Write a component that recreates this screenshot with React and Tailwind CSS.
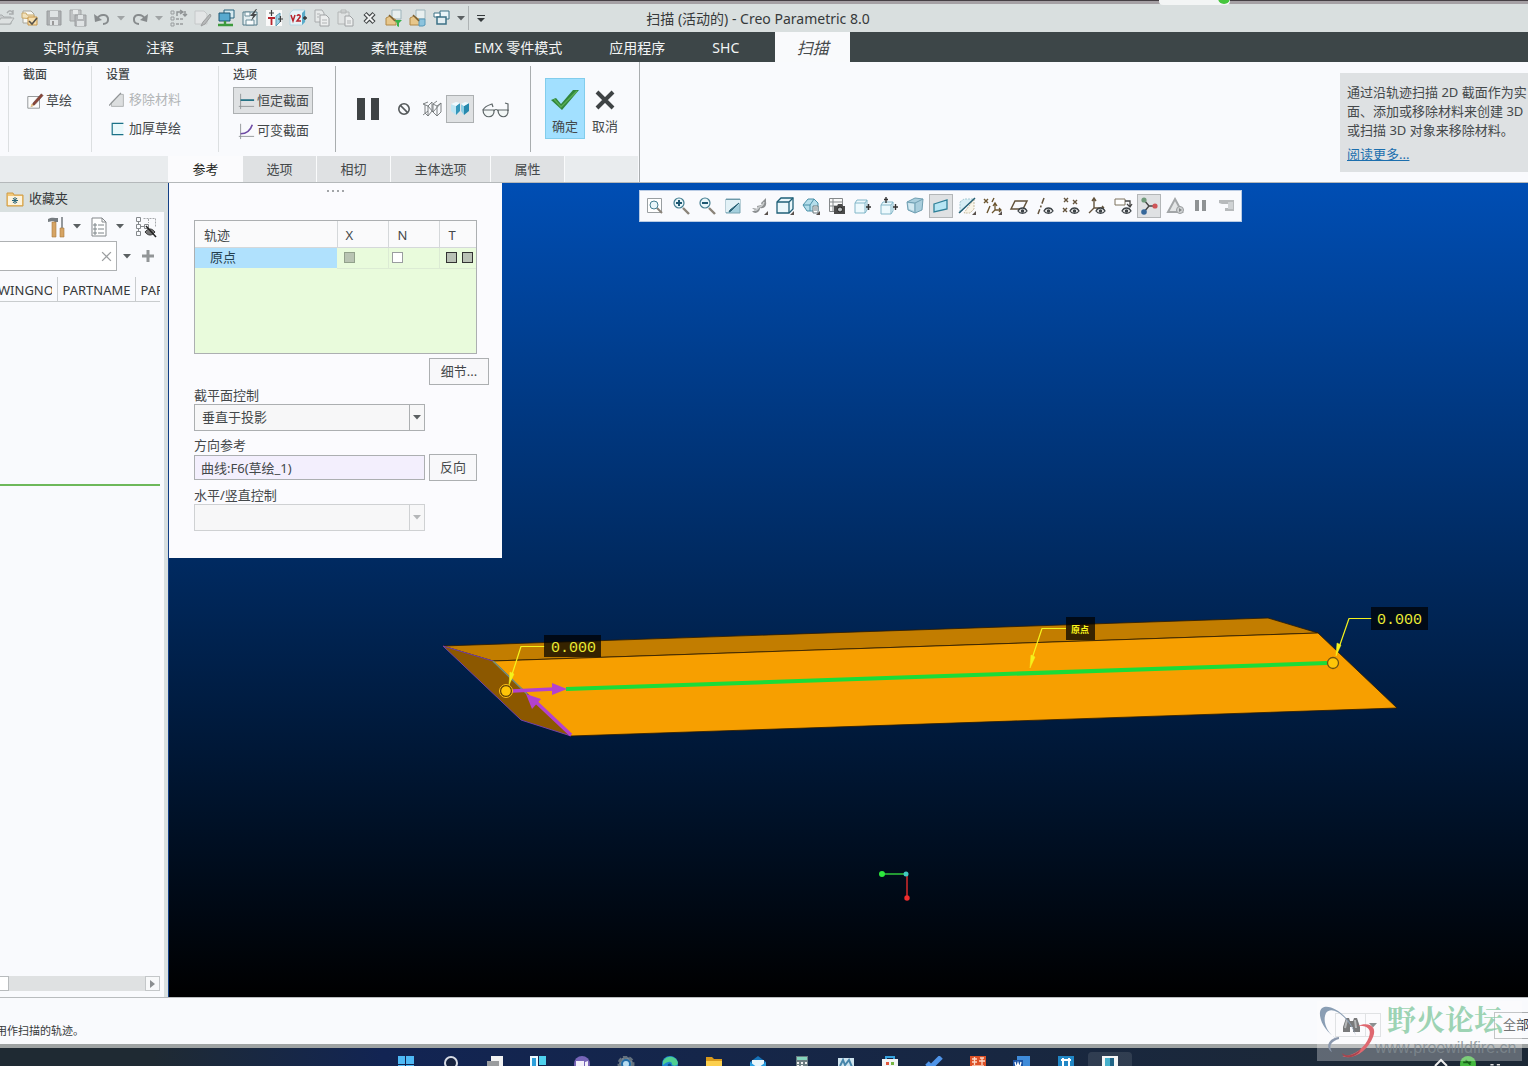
import { clsx } from 'clsx';

const quickIcons = {
  open: (
    <>
      <path d="M1 16V7h5l2 2h7v7z" fill="#c9cdce" stroke="#a9adae" />
      <path d="M1 16l4-6h13l-4 6z" fill="#dde1e1" stroke="#a9adae" />
      <path d="M11 5c2-3 4-3 6 0M17 2v4h-4" fill="none" stroke="#a9adae" strokeWidth="1.4" />
    </>
  ),
  folderCheck: (
    <>
      <path d="M3 3h8l3 3v9H3z" fill="#f7f7f2" stroke="#a8a69c" />
      <path d="M2 10V5h4l1 2h7v4z" fill="#f2e2bc" stroke="#c9a868" />
      <path d="M8 17V9h9v8z" fill="#f6dfae" stroke="#c8974b" />
      <path d="M9 13l3 3 5-6" fill="none" stroke="#55514a" strokeWidth="1.6" />
    </>
  ),
  save: (
    <>
      <path d="M3 3h14v14H3z" fill="#aeb1b3" stroke="#989b9d" />
      <path d="M6 3h8v6H6zM6 12h8v5H6z" fill="#dfe3e4" />
      <path d="M8 13h2v4H8z" fill="#999" />
    </>
  ),
  saveCopy: (
    <>
      <path d="M2 2h11v11H2z" fill="#c0c3c4" stroke="#a2a5a6" />
      <path d="M5 2h5v4H5z" fill="#e6e9e9" />
      <path d="M7 7h11v11H7z" fill="#b2b5b7" stroke="#9b9ea0" />
      <path d="M10 7h5v4h-5zM9 13h7v5H9z" fill="#dfe3e4" />
    </>
  ),
  undo: (
    <>
      <path d="M5 11C8 5 17 6 16 12c0 2-2 4-5 4" fill="none" stroke="#878b8d" strokeWidth="2" />
      <path d="M2 6l1 8 7-2z" fill="#878b8d" />
    </>
  ),
  redo: (
    <>
      <path d="M15 11C12 5 3 6 4 12c0 2 2 4 5 4" fill="none" stroke="#878b8d" strokeWidth="2" />
      <path d="M18 6l-1 8-7-2z" fill="#878b8d" />
    </>
  ),
  regenerate: (
    <>
      <path d="M3 3h3v3H3zM3 9h3v3H3zM3 15h3v3H3z" fill="none" stroke="#999d9f" />
      <path d="M8 11h8M8 16h8" stroke="#999d9f" strokeWidth="1.6" strokeDasharray="3 1" />
      <path d="M9 8V4h5M12 2l3 2-3 2M17 3v5M15 6l2 2 2-2" fill="none" stroke="#8e9294" strokeWidth="1.4" />
    </>
  ),
  edit: (
    <>
      <path d="M3 3h9l3 3v10H3z" fill="#e3e5e6" stroke="#c5c8c9" />
      <path d="M18 6l-7 8-2 4 4-2 6-8z" fill="#b7b9ba" stroke="#9b9d9e" />
    </>
  ),
  monitor: (
    <>
      <path d="M8 2h10v8H8z" fill="#d7eaf0" stroke="#27637c" />
      <path d="M3 5h11v8H3z" fill="#58a9ce" stroke="#1f5673" />
      <path d="M9 13v4M2 17h15" stroke="#3c9a3c" strokeWidth="2.4" />
    </>
  ),
  saveFlash: (
    <>
      <path d="M3 4h14v13H3z" fill="#e4eef1" stroke="#517987" />
      <path d="M6 12h8v5H6zM5 4h5v4H5z" fill="#f9fcfd" stroke="#6b8d99" />
      <path d="M16 1l-6 7h3l-2 5 6-7h-3l3-5z" fill="#47494b" />
    </>
  ),
  exportT: (
    <>
      <path d="M2 2h16v16H2z" fill="#f9f9f9" />
      <path d="M12 8l4-3v9l-4 4z" fill="#9cd0e4" stroke="#5f9cb5" />
      <path d="M4 10h7M7.500 10v7" stroke="#b8252e" strokeWidth="1.8" />
      <path d="M5 5h5M7.500 2v6M14 11h5M16.500 8v6" stroke="#3d3d3d" strokeWidth="1.2" />
    </>
  ),
  exportV2: (
    <>
      <path d="M2 5l3-3h12v12l-3 3H2z" fill="#e6f3f8" stroke="#b5d6e2" />
      <path d="M14 5l3-3v12l-3 3z" fill="#5aabc9" />
      <path d="M3 7l2 6 2-6M9 8c1-2 4-1 3 1l-3 4h4" fill="none" stroke="#b8252e" strokeWidth="1.5" />
      <path d="M15 10h4M17 8v4" stroke="#333" strokeWidth="1.3" />
    </>
  ),
  copy: (
    <>
      <path d="M3 2h7l2 3v9H3z" fill="#e7eaea" stroke="#a8abad" />
      <path d="M8 7h6l3 3v8H8z" fill="#eceeee" stroke="#9fa2a4" />
      <path d="M5 6h3M5 9h2M10 12h5M10 15h5" stroke="#b0b3b4" />
    </>
  ),
  paste: (
    <>
      <path d="M2 4h11v12H2zM5 2h5v3H5z" fill="#dfe2e2" stroke="#b3b6b6" />
      <path d="M9 8h5l3 3v7H9z" fill="#eceeee" stroke="#9fa2a4" />
      <path d="M11 13h4M11 15h4" stroke="#b0b3b4" />
    </>
  ),
  remove: (
    <>
      <path d="M5 5.500l9 9M14 5.500l-9 9" stroke="#3f4344" strokeWidth="4.4" />
      <path d="M5.500 6l8 8M13.500 6l-8 8" stroke="#f1f3f3" strokeWidth="2" />
    </>
  ),
  folderGreen: (
    <>
      <path d="M8 2h9v9H8z" fill="#e8efef" stroke="#9db4bb" />
      <path d="M2 17v-7l4-2 6 4v5z" fill="#e7c78b" stroke="#b08744" />
      <path d="M10 12h8l-3 3v4l-2-1v-3z" fill="#37b24a" />
      <path d="M5 7l6 6" stroke="#7b6032" strokeWidth="1.4" />
    </>
  ),
  folderBlue: (
    <>
      <path d="M8 2h9v9H8z" fill="#e8efef" stroke="#9db4bb" />
      <path d="M2 17v-7l4-2 6 4v5z" fill="#e7c78b" stroke="#b08744" />
      <path d="M11 11h6v6l-2 1h-4z" fill="#8cc3dd" stroke="#5698b8" />
      <path d="M5 7l6 6" stroke="#7b6032" strokeWidth="1.4" />
    </>
  ),
  windows: (
    <>
      <path d="M8 3h9v8H8z" fill="#e9f4f8" stroke="#3d7287" />
      <path d="M2 5h6v4H2z" fill="#fff" stroke="#3d7287" />
      <path d="M5 9h9v7H5z" fill="#e3eef2" stroke="#3d7287" strokeWidth="1.5" />
    </>
  ),
};

const quickAccess = [
  'open', 'folderCheck', 'save', 'saveCopy', 'undo', 'caretMuted', 'redo', 'caretMuted', 'regenerate', 'edit',
  'monitor', 'saveFlash', 'exportT', 'exportV2', 'copy', 'paste', 'remove', 'folderGreen', 'folderBlue', 'windows',
];

const menus = ['实时仿真', '注释', '工具', '视图', '柔性建模', 'EMX 零件模式', '应用程序', 'SHC'];

const eye = (
  <>
    <path d="M9 15c2-4 7-4 9 0-2 3-7 3-9 0z" fill="#fff" stroke="#3d4347" strokeWidth="1.3" />
    <circle cx="13.5" cy="15" r="1.8" fill="#3d4347" />
  </>
);
const corner = <path d="M19 15v4h-4z" fill="#59514c" />;
const lens = (
  <>
    <path d="M12 12l6 6" stroke="#8a8379" strokeWidth="2.4" />
    <circle cx="8" cy="7" r="5" fill="#e9f6fa" stroke="#457f91" strokeWidth="1.2" />
  </>
);

const viewTools = [
  { label: '重新调整', icon: (
    <>
      <path d="M2.500 2.500h14v14h-14z" fill="#fff" stroke="#9a9fa2" />
      <path d="M12 12l5 5" stroke="#8a8379" strokeWidth="2" />
      <circle cx="9" cy="9" r="4" fill="#e9f6fa" stroke="#457f91" />
    </>
  ) },
  { label: '放大', icon: <>{lens}<path d="M5 7h6M8 4v6" stroke="#1e5872" strokeWidth="2" /></> },
  { label: '缩小', icon: <>{lens}<path d="M5 7h6" stroke="#1e5872" strokeWidth="2" /></> },
  { label: '重画', icon: (
    <>
      <path d="M3 3h14v14H3z" fill="#a4cfdd" stroke="#79a4b2" />
      <path d="M3 4h14v3L6 16H3z" fill="#e2f1f6" />
      <path d="M3 3.500h14" stroke="#6b98a8" />
      <path d="M16 7l-8 8-2 1 1-2z" fill="#2c6478" stroke="#2c6478" />
    </>
  ) },
  { label: '渲染', icon: (
    <>
      <path d="M3 15c3 4 8 1 8-3 4 1 7-2 6-6V2l-5 5 1 2-5 1 1 3-6-1 4 3z" fill="#8c8f91" />
      <path d="M5 14c3 1 4-1 5-3 3 0 4-2 5-5" fill="none" stroke="#c9cccd" strokeWidth="1.600" />
      {corner}
    </>
  ) },
  { label: '显示样式', icon: (
    <>
      <path d="M2 6l4-4h12v11l-4 4H2z" fill="#eaf7fb" stroke="#1f6078" strokeWidth="1.300" />
      <path d="M2 6h12v11M14 6l4-4" fill="none" stroke="#1f6078" strokeWidth="1.300" />
      {corner}
    </>
  ) },
  { label: '已保存方向', icon: (
    <>
      <path d="M2 9l5-6h6l4 4v8H6z" fill="#b5deeb" stroke="#4b91a9" />
      <path d="M2 9h7l4-6M9 9v6" fill="none" stroke="#4b91a9" />
      <path d="M12 10h5v7h-5z" fill="#fff" stroke="#6a787d" />
      <path d="M13 12h3M13 14h3" stroke="#6a787d" />
      {corner}
    </>
  ) },
  { label: '视图管理器', icon: (
    <>
      <path d="M2.500 2.500h13v13h-13zM2 6h14M2 10h8M6 2v14" fill="#fafafa" stroke="#85898b" />
      <path d="M7 10h3l1-2h4l1 2h2v8H7z" fill="#4b4b4b" />
      <circle cx="13" cy="13.500" r="2.500" fill="#b9bdbf" stroke="#222" />
    </>
  ) },
  { label: '右移', icon: (
    <>
      <path d="M2 7l2-3h10v10l-2 3H2z" fill="#edf9fd" stroke="#83b7c9" />
      <path d="M2 7h10v10M12 7l2-3" fill="none" stroke="#83b7c9" />
      <path d="M13 11h5M15.500 8v6" stroke="#333" strokeWidth="1.500" />
    </>
  ) },
  { label: '上移', icon: (
    <>
      <path d="M2 9l2-3h10v9l-2 3H2z" fill="#edf9fd" stroke="#83b7c9" />
      <path d="M2 9h10v9M12 9l2-3" fill="none" stroke="#83b7c9" />
      <path d="M14 11h5M16.500 8v6M7 1v6M5 3.500h4" stroke="#333" strokeWidth="1.400" />
    </>
  ) },
  { label: '透视图', icon: (
    <>
      <path d="M2 6l8-4 8 1-1 11-7 3-7-3z" fill="#a9cedd" stroke="#6f9fb2" />
      <path d="M2 6l8 1 8-4M10 7v10" fill="none" stroke="#6f9fb2" />
      <path d="M3 7l6 1v7l-5-2z" fill="#d3e9f1" />
    </>
  ) },
  { label: '截面', active: true, icon: <path d="M3 8l13-4v9L3 16z" fill="#b7e6f4" stroke="#2f8199" strokeWidth="1.300" /> },
  { label: '基准显示', icon: (
    <>
      <path d="M3 6l4-3h10l-14 14z" fill="#d7eef5" stroke="#a4c8d3" strokeDasharray="2 1" />
      <path d="M17 3v10l-4 4H7z" fill="#f8f4e8" stroke="#c7bca1" strokeDasharray="2 1" />
      <path d="M2 17L18 2" stroke="#245f74" strokeWidth="1.500" />
      {corner}
    </>
  ) },
  { label: '基准过滤器', icon: (
    <>
      <path d="M1 3l4 4M5 3L1 7M11 2L9 6M7 10l-3 7" stroke="#6b552f" strokeWidth="1.400" />
      <path d="M12 7v7l-3 3M12 14h6M10 10l2-3 2 3M16 12l2 2-2 2" fill="none" stroke="#6b552f" strokeWidth="1.300" />
      {corner}
    </>
  ) },
  { label: '平面显示', icon: <><path d="M2 13l4-8h12l-4 8z" fill="none" stroke="#63533c" strokeWidth="1.500" />{eye}</> },
  { label: '轴显示', icon: <><path d="M9 2L3 18" stroke="#63533c" strokeWidth="1.500" strokeDasharray="6 2 2 2" />{eye}</> },
  { label: '点显示', icon: <><path d="M3 2l4 4M7 2L3 6M12 4l4 4M16 4l-4 4M2 12l4 4M6 12l-4 4" stroke="#63533c" strokeWidth="1.400" />{eye}</> },
  { label: '坐标系显示', icon: <><path d="M7 3v9l-5 5M7 12h10M5 5l2-3 2 3M15 10l2 2" fill="none" stroke="#63533c" strokeWidth="1.400" />{eye}</> },
  { label: '注释显示', icon: <><path d="M2 3h10v6H2z" fill="#fff" stroke="#7d735f" /><path d="M12 5h5v5M14 8l3 3 2-3" fill="none" stroke="#444" strokeWidth="1.300" />{eye}</> },
  { label: '旋转中心', active: true, icon: (
    <>
      <path d="M5 4l5 6-5 6M10 10h7" fill="none" stroke="#444" strokeWidth="1.400" />
      <circle cx="5" cy="4" r="2.600" fill="#6f9a7a" />
      <circle cx="5" cy="16" r="2.800" fill="#35679a" />
      <circle cx="16" cy="10" r="2.600" fill="#cf5457" />
    </>
  ) },
  { label: '仿真', icon: (
    <>
      <path d="M10 3l7 13H3z" fill="#e3e5e6" stroke="#a3a6a8" strokeWidth="2" />
      <circle cx="15" cy="14" r="3.500" fill="#d0d3d4" stroke="#999c9e" />
      <path d="M14 12l3 2-3 2z" fill="#858889" />
    </>
  ) },
  { label: '暂停', icon: <path d="M4 4h4v11H4zM11 4h4v11h-4z" fill="#8f9294" /> },
  { label: '停止', icon: (
    <>
      <path d="M2 4h15v11H8v-3h3V8H5L2 7z" fill="#b7babc" />
      <path d="M11 6h5v7h-5z" fill="#cfd2d4" />
    </>
  ) },
];

const dashTabs = [
  { label: '选项', width: 'w-[74px]' },
  { label: '相切', width: 'w-[74px]' },
  { label: '主体选项', width: 'w-[100px]' },
  { label: '属性', width: 'w-[74px]' },
];

const taskbarApps = [
  { label: '开始', icon: <path d="M2 0h7v8H2zM10 0h8v8h-8zM2 9h7v8H2zM10 9h8v8h-8z" fill="#4eb9f5" /> },
  { label: '搜索', icon: <circle cx="11" cy="7" r="6" fill="#17233f" stroke="#d7dbe4" strokeWidth="2" /> },
  { label: '任务视图', icon: <><path d="M7 0h12v12H7z" fill="#f2f2f2" /><path d="M3 5h12v12H3z" fill="#9a9c9e" /></> },
  { label: '小组件', icon: <><path d="M2 0h8v17H2z" fill="#eefaff" /><path d="M11 0h7v9h-7z" fill="#4fd2ee" /><path d="M4 2h4v12H4z" fill="#2c9fdb" /></> },
  { label: '聊天', icon: <><circle cx="10" cy="8" r="8" fill="#7765b8" /><path d="M4 5h8v9H4zM13 6l3-1v7l-3-1z" fill="#f2effa" /></> },
  { label: '设置', icon: <><circle cx="10" cy="8" r="7" fill="#7b8894" stroke="#64717d" strokeWidth="3" strokeDasharray="4 2" /><circle cx="10" cy="8" r="4" fill="#b8ddf1" stroke="#1f6ca8" strokeWidth="2" /></> },
  { label: 'Edge', icon: <><circle cx="10" cy="8" r="8" fill="#1f86cf" /><path d="M3 5c4-7 14-5 15 2-1 4-6 3-6 1s-3-4-9 1z" fill="#4fcf92" /><path d="M8 8c3-2 4 2 4 5H7z" fill="#0b4c88" /></> },
  { label: '文件资源管理器', icon: <><path d="M2 1h6l2 2h8v5H2z" fill="#d99a1c" /><path d="M2 5h16v12H2z" fill="#fccf4d" /></> },
  { label: '邮件', icon: <><path d="M2 6l8-6 8 6v10H2z" fill="#1673b8" /><path d="M4 4h12v6H4z" fill="#e7f5fb" /><path d="M2 6l8 6 8-6v10H2z" fill="#2a9ee0" /></> },
  { label: '计算器', icon: <><path d="M4 0h12v17H4z" fill="#6b7c81" /><path d="M5 1h10v3H5z" fill="#84d5bd" /><path d="M5 6h2v2H5zM9 6h2v2H9zM13 6h2v2h-2zM5 9h2v2H5zM9 9h2v2H9z" fill="#eee" /></> },
  { label: '图表', icon: <><path d="M2 2h16v14H2z" fill="#cfe4ee" /><path d="M4 10l3-6 2 5 4-5 3 7" fill="none" stroke="#4685aa" strokeWidth="2" /></> },
  { label: '商店', icon: <><path d="M6 4V1h8v3" fill="none" stroke="#39a4df" strokeWidth="2" /><path d="M2 3h16v13H2z" fill="#f2f4f5" /><path d="M6 6h3v3H6z" fill="#e2573d" /><path d="M11 6h3v3h-3z" fill="#77b642" /></> },
  { label: '待办', icon: <path d="M3 7l4 4L17 1" fill="none" stroke="#4f94e8" strokeWidth="5" /> },
  { label: '小程序', icon: <><path d="M2 0h16v17H2z" fill="#dd5127" /><path d="M4 3h5M6.500 1v8M4 6h5M12 2h4M11 5h6M14 2v7M4 10h12" stroke="#fbd7c5" strokeWidth="1.300" /></> },
  { label: 'Word', icon: <><path d="M5 0h13v16H5z" fill="#3f8bd9" /><path d="M1 4h10v12H1z" fill="#1c54a5" /><path d="M3 6l1.500 6L6 7l1.500 5L9 6" fill="none" stroke="#fff" strokeWidth="1.300" /></> },
  { label: '截图', icon: <><path d="M2 0h16v17H2z" fill="#2187c6" /><path d="M5 4h10M7 2v9M13 2v9" stroke="#fff" strokeWidth="2" /></> },
  { label: 'Creo', active: true, icon: <><path d="M2 0h16v17H2z" fill="#f5f6f6" /><path d="M5 2h5v12H5z" fill="#46b0cb" /><path d="M10 2h4v12h-4z" fill="#216486" /></> },
];

function Icon({ className = 'size-5', children, viewBox = '0 0 20 20' }) {
  return (
    <svg viewBox={viewBox} className={clsx('shrink-0', className)} aria-hidden="true">
      {children}
    </svg>
  );
}

function Caret({ className = 'text-[#5b6062]' }) {
  return (
    <Icon viewBox="0 0 8 5" className={clsx('h-[5px] w-2', className)}>
      <path d="M0 0h8L4 4.500z" fill="currentColor" />
    </Icon>
  );
}

function TitleBar() {
  return (
    <header className="border-t border-[#453f44]">
      <div className="grid grid-cols-[1fr_auto_1fr] items-center overflow-hidden border-t-3 border-[#a5a0a4] bg-[#d9dfdf] pr-3">
        <div className="-ml-1.5 flex h-7 items-center">
          {quickAccess.map((name, index) =>
            name === 'caretMuted' ? (
              <button key={index} type="button" aria-label="更多" className="flex w-3.5 shrink-0 justify-center">
                <Caret className="text-[#a0a4a5]" />
              </button>
            ) : (
              <button key={index} type="button" aria-label={name} className="flex w-6 shrink-0 justify-center">
                <Icon>{quickIcons[name]}</Icon>
              </button>
            )
          )}
          <button type="button" aria-label="窗口" className="flex w-3.5 justify-center">
            <Caret />
          </button>
          <span className="h-6 w-px bg-[#aeb3b4]" />
          <button type="button" aria-label="自定义" className="flex w-6 justify-center">
            <Icon viewBox="0 0 8 7" className="h-[7px] w-2 text-[#34393b]">
              <path d="M0 0h8v1H0zM0 3h8L4 7z" fill="currentColor" />
            </Icon>
          </button>
        </div>
        <h1 className="pt-0.5 text-sm leading-6 whitespace-nowrap text-[#36393a]">扫描 (活动的) - Creo Parametric 8.0</h1>
      </div>
    </header>
  );
}

function MenuBar() {
  return (
    <nav className="flex h-[30px] items-stretch bg-[#3d4648] pl-5 text-sm whitespace-nowrap text-[#f3f5f5]">
      {menus.map((item) => (
        <button key={item} type="button" className="mr-px px-[23px] pt-0.5">
          {item}
        </button>
      ))}
      <button type="button" className="ml-3 w-[75px] bg-[#f9fafc] pt-0.5 text-base text-[#45494b] italic">
        扫描
      </button>
    </nav>
  );
}

function RibbonGroup({ title, className, children }) {
  return (
    <section className={clsx('flex flex-col items-start', className)}>
      <h2 className="text-xs leading-[18px] font-medium text-[#44484a]">{title}</h2>
      {children}
    </section>
  );
}

function Ribbon() {
  return (
    <div className="flex items-start border-b border-[#b4b8ba] bg-[#f9fafd]">
      <div className="flex w-[640px] shrink-0 flex-col border-r border-[#a9adaf]">
        <div className="flex h-[94px] text-[13px] text-[#44484a]">
          <div className="flex py-1 pl-2">
            <RibbonGroup title="截面" className="w-[84px] border-x border-[#dcdfe1] pl-3.5">
              <button type="button" className="mt-1 flex h-[26px] items-center gap-0.5 pl-[3px]">
                <Icon className="size-[18px]">
                  <path d="M2 5h13v13H2z" fill="#fbfbfb" stroke="#8c9092" />
                  <path d="M17 2L8 12l-2 4 4-2 9-10z" fill="#8b4538" stroke="#5c3a34" strokeWidth=".6" />
                  <path d="M5 17l1-4 3 2z" fill="#e5c389" />
                </Icon>
                草绘
              </button>
            </RibbonGroup>
            <RibbonGroup title="设置" className="w-[127px] border-r border-[#dcdfe1] pl-3.5">
              <button type="button" disabled className="mt-[3px] flex h-[26px] items-center gap-1 pl-[3px] text-[#b2b5b7]">
                <Icon className="size-4">
                  <path d="M3 18V13L13 3h5v15z" fill="#dcdedf" stroke="#a5a8aa" />
                  <path d="M0 17L15 1" stroke="#909395" strokeWidth="1.500" />
                </Icon>
                移除材料
              </button>
              <button type="button" className="mt-[3px] flex h-[26px] items-center gap-1 pl-[3px]">
                <Icon className="size-4">
                  <path d="M18 3H4v14h14" fill="#e9f8fb" stroke="#1b7187" strokeWidth="1.500" />
                </Icon>
                加厚草绘
              </button>
            </RibbonGroup>
            <RibbonGroup title="选项" className="w-[116px] pl-3.5">
              <button type="button" className="mt-[3px] flex h-[27px] items-center gap-0.5 border border-[#adb0b2] bg-[#dfe1e3] px-[3px]">
                <Icon className="size-[18px]">
                  <path d="M4 2v17M2 16h17" stroke="#8f9496" />
                  <path d="M4 9h15" stroke="#14687c" strokeWidth="1.800" />
                </Icon>
                恒定截面
              </button>
              <button type="button" className="mt-1 flex h-[26px] items-center gap-0.5 px-1">
                <Icon className="size-[18px]">
                  <path d="M4 2v17M2 16h17" stroke="#8f9496" />
                  <path d="M4 13c7 0 11-4 13-10" fill="none" stroke="#6f4ca5" strokeWidth="1.800" />
                </Icon>
                可变截面
              </button>
            </RibbonGroup>
          </div>

          <div className="my-1 flex w-[196px] items-center border-x border-[#a9adaf] pl-4">
            <button type="button" aria-label="暂停" className="w-9 px-1">
              <Icon viewBox="0 0 24 22" className="h-[22px] w-6">
                <path d="M1 0h8v22H1zM15 0h8v22h-8z" fill="#3f4345" />
              </Icon>
            </button>
            <button type="button" aria-label="无预览" className="flex w-8 justify-center">
              <Icon className="size-4">
                <circle cx="10" cy="10" r="6.500" fill="none" stroke="#55595b" strokeWidth="2" />
                <path d="M5.500 5.500l9 9" stroke="#55595b" strokeWidth="2" />
              </Icon>
            </button>
            <button type="button" aria-label="分离预览" className="flex w-6 justify-center">
              <Icon className="size-5">
                <path
                  d="M1 5l5 2v10l-3-3V6M6 7l4-4v9l-4 5M11 5l4 2v10l-4-4zM15 7l4-3v9l-4 4M1 5l5-2M11 5l4-3M19 4l-8 9-1-1M6 7l5 6M1 16l5-4"
                  fill="none"
                  stroke="#717577"
                  strokeWidth=".9"
                />
              </Icon>
            </button>
            <button type="button" aria-label="连接预览" className="ml-0.5 flex size-7 items-center justify-center border border-[#adb0b2] bg-[#dfe1e3]">
              <Icon className="size-5">
                <path d="M1 5l5 2v9l-5-4z" fill="#bde5f3" />
                <path d="M6 7l4-3v8l-4 4z" fill="#3396ba" />
                <path d="M11 5l3 2v9l-3-4z" fill="#8bcce3" />
                <path d="M14 7l5-3v8l-5 4z" fill="#2789ad" />
                <path d="M1 5l5-2 4 1-4 3zM11 5l4-2 4 1-5 3z" fill="#eefaff" />
              </Icon>
            </button>
            <button type="button" aria-label="眼镜预览" className="ml-2">
              <Icon viewBox="0 0 28 20" className="h-5 w-7">
                <path d="M1 11h11c1 9-11 9-11 0zM16 11h10c1 9-10 9-10 0z" fill="#f3f7f7" stroke="#5e6668" strokeWidth="1.200" />
                <path d="M1 11c2-4 6-5 9-6l1 3M12 12c1-2 3-2 4 0M26 12V5l-3-1" fill="none" stroke="#5e6668" strokeWidth="1.200" />
              </Icon>
            </button>
          </div>

          <div className="flex items-start gap-0.5 pt-4 pl-3.5">
            <button type="button" className="flex h-[61px] w-10 flex-col items-center justify-end border border-[#82cdec] bg-[#a2e0ff] pb-0.5">
              <Icon viewBox="0 0 30 24" className="h-6 w-[30px]">
                <path d="M1 12l5-2 5 6L23 2h6L12 22z" fill="#31863c" />
                <path d="M4 11l7 8L27 3" fill="none" stroke="#59ad55" strokeWidth="1.500" />
              </Icon>
              <span className="pt-1 leading-5">确定</span>
            </button>
            <button type="button" className="flex h-[61px] w-9 flex-col items-center justify-end pb-[3px]">
              <Icon className="mb-1.5 size-5">
                <path d="M2 2l16 16M18 2L2 18" stroke="#3f4345" strokeWidth="4" />
              </Icon>
              <span className="leading-5">取消</span>
            </button>
          </div>
        </div>

        <div className="mr-px flex h-[26px] bg-[#e9ecee] pl-[168px] text-[13px] text-[#44484a]">
          <button type="button" className="w-[75px] bg-[#fbfbfd] pt-0.5 text-[#1d1f20]">
            参考
          </button>
          {dashTabs.map((tab) => (
            <button key={tab.label} type="button" className={clsx('border-r border-[#fafbfc] bg-[#dfe1e3] pt-0.5', tab.width)}>
              {tab.label}
            </button>
          ))}
        </div>
      </div>

      <aside className="mt-[11px] ml-auto w-[188px] overflow-hidden bg-[#dee1e3] pt-2.5 pb-2 pl-[7px] text-[13px] leading-[19px] whitespace-nowrap text-[#44484a]">
        <p>
          通过沿轨迹扫描 2D 截面作为实
          <br />
          面、添加或移除材料来创建 3D
          <br />
          或扫描 3D 对象来移除材料。
        </p>
        <a href="#more" className="mt-[5px] block text-[#1c6fae] underline">
          阅读更多...
        </a>
      </aside>
    </div>
  );
}

function ModelTree() {
  return (
    <aside className="flex w-[168px] shrink-0 flex-col border-r-4 border-[#d8dfe0] bg-[#f9fafd] text-[#36393a]">
      <div className="-mr-1 flex h-[29px] items-center gap-1 bg-[#d9e0e0] pt-0.5 pl-[5px] text-[13px]">
        <Icon>
          <path d="M2 4h6l1 2h9v11H2z" fill="#f2c878" stroke="#cf9b45" />
          <path d="M3 7h14v9H3z" fill="#fdf3dc" />
          <path d="M10 8v7M7 11.500h6M8 9l4 5M12 9l-4 5" stroke="#2a6478" />
        </Icon>
        收藏夹
      </div>
      <div className="flex h-[29px] items-center pl-[46px]">
        <button type="button" aria-label="设置" className="w-5">
          <Icon className="h-[22px] w-5" viewBox="0 0 20 22">
            <path d="M2 3c3-2 7-1 10-1v4H9L7 5 2 6z" fill="#777d81" />
            <path d="M6 6h4v15H6z" fill="#d6a464" stroke="#a97a3e" strokeWidth=".6" />
            <path d="M16 1v11" stroke="#70777b" strokeWidth="1.500" />
            <path d="M14 12h4v9h-4z" fill="#d6a464" stroke="#a97a3e" strokeWidth=".6" />
          </Icon>
        </button>
        <button type="button" aria-label="设置菜单" className="flex w-[22px] justify-center"><Caret /></button>
        <button type="button" aria-label="显示" className="w-[22px]">
          <Icon className="h-[22px] w-[22px]" viewBox="0 0 22 22">
            <path d="M4 2h10l4 4v14H4z" fill="#fff" stroke="#83878a" />
            <path d="M14 2v4h4" fill="none" stroke="#83878a" />
            <path d="M6 8h2v2H6zM6 12h2v2H6zM6 16h2v2H6z" fill="none" stroke="#7c8488" />
            <path d="M10 9h6M10 13h6M10 17h6" stroke="#7c8488" />
          </Icon>
        </button>
        <button type="button" aria-label="显示菜单" className="flex w-5 justify-center"><Caret /></button>
        <button type="button" aria-label="树列" className="ml-1">
          <Icon className="size-6" viewBox="0 0 24 24">
            <path d="M2.500 2.500h4v4h-4zM2.500 9.500h4v4h-4zM2.500 16.500h4v4h-4zM4.500 6.500v3M4.500 13.500v3M6.500 11.500h4M10.500 9.500h4v4h-4z" fill="none" stroke="#85898c" />
            <path d="M9.500 3.500h12v9M14.500 4v4" fill="none" stroke="#a5a8ab" strokeDasharray="2 1" />
            <path d="M11 17c3-4 7-4 10 0-3 4-7 4-10 0z" fill="#777" stroke="#333" />
            <path d="M12 11l10 11" stroke="#222" strokeWidth="1.500" />
          </Icon>
        </button>
      </div>
      <div className="flex h-[30px] items-center">
        <div className="flex h-full w-[117px] items-center border-y border-r border-[#aeb1b3] bg-white">
          <input aria-label="搜索" className="w-[101px] outline-none" />
          <button type="button" aria-label="清除">
            <Icon viewBox="0 0 10 10" className="size-[11px]">
              <path d="M1 1l8 8M9 1L1 9" stroke="#9b9ea0" strokeWidth="1.200" />
            </Icon>
          </button>
        </div>
        <button type="button" aria-label="搜索选项" className="flex w-[19px] justify-center"><Caret /></button>
        <button type="button" aria-label="添加" className="ml-1.5">
          <Icon viewBox="0 0 12 12" className="size-3">
            <path d="M6 0v12M0 6h12" stroke="#929597" strokeWidth="3" />
          </Icon>
        </button>
      </div>
      <table className="mt-1.5 w-[160px] table-fixed border-b border-[#c9ccce] text-left text-[13px]">
        <thead>
          <tr className="h-6 whitespace-nowrap">
            <th className="w-[57px] overflow-hidden border-r border-[#c9ccce] pt-1 font-normal">
              <div className="-ml-0.5 w-[54px] overflow-hidden">WINGNO</div>
            </th>
            <th className="w-[78px] overflow-hidden border-r border-[#c9ccce] pt-1 pl-[5px] font-normal">
              <div className="w-[68px] overflow-hidden">PARTNAME</div>
            </th>
            <th className="overflow-hidden pt-1 pl-[5px] font-normal">PAR</th>
          </tr>
        </thead>
      </table>
      <div className="mt-[182px] h-0.5 w-[160px] bg-[#6db85a]" />
      <div className="mt-auto mb-1.5 flex h-[15px] w-[160px] justify-between bg-[#dfe1e2]">
        <span className="w-[9px] border border-l-0 border-[#b8bbbd] bg-white" />
        <button type="button" aria-label="向右滚动" className="flex w-[15px] items-center justify-center border border-[#c4c7c9] bg-[#f8f9fa]">
          <Icon viewBox="0 0 5 8" className="h-2 w-[5px]">
            <path d="M0 0l5 4-5 4z" fill="#8b8e90" />
          </Icon>
        </button>
      </div>
    </aside>
  );
}

function Dropdown({ id, label, value, disabled }) {
  return (
    <div className="mb-[5px] w-[231px]">
      <label htmlFor={id} className="block leading-[18px]">
        {label}
      </label>
      <div className={clsx('relative flex h-[27px] border bg-[#f7f7f8]', disabled ? 'border-[#cfd1d3]' : 'border-[#acafb1]')}>
        <select id={id} disabled={disabled} className="w-full appearance-none pl-[7px] outline-none">
          <option>{value}</option>
        </select>
        <span
          className={clsx(
            'pointer-events-none absolute inset-y-0 right-0 flex w-[15px] items-center justify-center border-l',
            disabled ? 'border-[#cfd1d3]' : 'border-[#acafb1]'
          )}
        >
          <Caret className={disabled ? 'text-[#b4b6b8]' : 'text-[#5b6062]'} />
        </span>
      </div>
    </div>
  );
}

function TrackBox({ label, className, ...props }) {
  return <input type="checkbox" aria-label={label} className={clsx('block size-[11px] appearance-none border', className)} {...props} />;
}

function ReferencePanel() {
  return (
    <section className="absolute top-0 left-0 w-[333px] bg-[#fbfbfe] px-[25px] pb-[22px] text-[13px] text-[#44484a]">
      <div className="flex h-[37px] justify-center gap-[3px] pt-[7px]">
        {[0, 1, 2, 3].map((dot) => (
          <span key={dot} className="size-0.5 bg-[#a2a5a8]" />
        ))}
      </div>
      <div className="h-[134px] border border-[#acafb1] bg-[#e9fbdc]">
        <table className="w-full table-fixed text-left">
          <thead className="bg-[#fafafb]">
            <tr className="h-[26px]">
              <th className="w-[142px] border-r border-b border-[#d5d8da] pt-1 pl-[9px] font-normal">轨迹</th>
              <th className="w-[51px] border-r border-b border-[#d5d8da] pt-1 pl-2 font-normal">X</th>
              <th className="w-[51px] border-r border-b border-[#d5d8da] pt-1 pl-[9px] font-normal">N</th>
              <th className="border-b border-[#d5d8da] pt-1 pl-[9px] font-normal">T</th>
            </tr>
          </thead>
          <tbody>
            <tr className="h-[21px]">
              <td className="bg-[#b0e1fd] pl-[15px] text-[#24404f]">原点</td>
              <td className="border-r border-b border-[#dcebd4] pl-[7px]">
                <TrackBox label="X" disabled className="border-[#92a18b] bg-[#b9c4b3]" />
              </td>
              <td className="border-r border-b border-[#dcebd4] pl-[3px]">
                <TrackBox label="N" className="border-[#9a9d9f] bg-white" />
              </td>
              <td className="border-b border-[#dcebd4]">
                <div className="flex gap-[5px] pl-1.5">
                  <TrackBox label="T 1" className="border-[#333] bg-[#b9c1b5]" />
                  <TrackBox label="T 2" className="border-[#333] bg-[#b9c1b5]" />
                </div>
              </td>
            </tr>
          </tbody>
        </table>
      </div>
      <button type="button" className="mt-1 ml-[235px] block h-[27px] w-[60px] border border-[#acafb1] bg-[#f8f8fa]">
        细节...
      </button>
      <form className="pt-px">
        <Dropdown id="plane-control" label="截平面控制" value="垂直于投影" />
        <label htmlFor="direction" className="block leading-[18px]">
          方向参考
        </label>
        <div className="mb-[5px] flex h-[27px] items-center gap-1">
          <input
            id="direction"
            defaultValue="曲线:F6(草绘_1)"
            className="h-[25px] w-[231px] border border-[#acafb1] bg-[#f3effd] px-1.5 outline-none"
          />
          <button type="button" className="h-full w-12 border border-[#acafb1] bg-[#f8f8fa]">
            反向
          </button>
        </div>
        <Dropdown id="vertical-control" label="水平/竖直控制" value="" disabled />
      </form>
    </section>
  );
}

function Scene() {
  return (
    <svg viewBox="0 0 1359 814" className="absolute inset-0 size-full" role="img" aria-label="模型">
      <g transform="translate(-169 -183)" strokeLinejoin="round">
        <path d="M443 646L1268 618L1318 633L493 661z" fill="#c27d00" stroke="#2b1b00" strokeWidth=".8" />
        <path d="M493 661L1318 633L1397 708L571 736z" fill="#f79f00" stroke="#2b1b00" strokeWidth=".8" />
        <path d="M443 646L493 661L571 736L521 720z" fill="#8c5800" stroke="#7440a8" />
        <path d="M493 661l34 33" stroke="#73907c" strokeWidth="1.500" />
        <path d="M566 689L1327 663" stroke="#1bdc38" strokeWidth="4" />
        <path d="M512 691l42-2" stroke="#b342cf" strokeWidth="3.500" />
        <path d="M552 683l15 6-15 6z" fill="#b342cf" />
        <path d="M571 735l-35-33" stroke="#b342cf" strokeWidth="3.500" />
        <path d="M526 694l15 5-9 10z" fill="#b342cf" />
        <circle cx="506" cy="691" r="6.500" fill="#5b3e05" stroke="#ffc21a" />
        <circle cx="506" cy="691" r="4.800" fill="#ffc508" />
        <circle cx="1333" cy="663" r="5.500" fill="#ffc508" stroke="#6f5410" strokeWidth="1.300" />
        <g fill="none" stroke="#f4f21c" strokeWidth="1.200">
          <path d="M545 646.500h-24l-9 28M1066 628.500h-24l-10 30M1372 618.500h-23l-10 29" />
        </g>
        <path d="M509 685l1-13 4 2zM1030 668l1-13 4 2zM1336 656l1-13 4 2z" fill="#f4f21c" stroke="#f4f21c" strokeWidth=".5" />
        <path d="M544 635h57v22h-57zM1066 617h29v23h-29zM1371 607h57v23h-57z" fill="#000" fillOpacity=".72" />
        <g fill="#e9ec35" className="font-['Liberation_Mono',monospace] text-[15px]">
          <text x="551" y="652">0.000</text>
          <text x="1377" y="624">0.000</text>
        </g>
        <text x="1071" y="633" fill="#f8f51d" className="text-[9px] font-bold">原点</text>
        <path d="M882 874h24" stroke="#2fc83c" strokeWidth="1.500" />
        <path d="M907 874v24" stroke="#d42b2b" strokeWidth="1.500" />
        <circle cx="882" cy="874" r="3" fill="#2de83d" />
        <circle cx="906" cy="874" r="2.500" fill="#42c9c0" />
        <circle cx="907" cy="898" r="2.700" fill="#f02d2d" />
      </g>
    </svg>
  );
}

function ViewToolbar() {
  return (
    <div className="absolute top-[7px] left-[470px] flex h-8 items-center border border-[#b9cbe4] bg-[#f9fafd] pr-px pl-0.5">
      {viewTools.map((tool) => (
        <button
          key={tool.label}
          type="button"
          aria-label={tool.label}
          className={clsx('mx-px flex size-6 items-center justify-center', tool.active && 'border border-[#b3b6b8] bg-[#dfe1e3]')}
        >
          <Icon>{tool.icon}</Icon>
        </button>
      ))}
    </div>
  );
}

function StatusBar() {
  return (
    <footer className="flex h-[51px] items-center border-t border-b-4 border-t-[#b9bcbe] border-b-[#9fa3a3] bg-[#f9fafd] text-[#36393a]">
      <p className="-ml-1 pt-5 text-[11px]">用作扫描的轨迹。</p>
      <div className="mt-2 ml-auto flex h-6 items-center border border-[#d3d6d8]">
        <button type="button" aria-label="查找" className="flex h-full w-[30px] items-center justify-center border-r border-[#d3d6d8]">
          <Icon>
            <path d="M5 3h3l1 3h3l1-3h3l3 9v5h-7v-5H9v5H2v-5z" fill="#3f4143" />
            <path d="M6 5l-2 8M14 5l1 8" stroke="#96999b" strokeWidth="2" />
          </Icon>
        </button>
        <button type="button" aria-label="查找选项" className="flex w-3.5 justify-center"><Caret /></button>
      </div>
      <select aria-label="过滤器" className="mt-2 ml-[113px] h-[27px] w-[34px] appearance-none border border-r-0 border-[#a9acae] pl-2 text-[13px]">
        <option>全部</option>
      </select>
    </footer>
  );
}

function Taskbar() {
  return (
    <div className="flex h-[18px] items-start overflow-hidden bg-linear-to-r from-[#1f2a33] from-10% via-[#122453] via-25% to-[#1c2836] to-90% pl-[384px]">
      {taskbarApps.map((app) => (
        <button
          key={app.label}
          type="button"
          aria-label={app.label}
          className={clsx('flex w-11 shrink-0 items-start justify-center', app.active ? 'mt-1 rounded bg-white/10 pt-1' : 'pt-2')}
        >
          <Icon>{app.icon}</Icon>
        </button>
      ))}
      <div className="mt-2 ml-auto flex items-start gap-3 pr-6">
        <Icon className="size-3.5" viewBox="0 0 14 14">
          <path d="M1 10l6-6 6 6" fill="none" stroke="#eee" strokeWidth="2" />
        </Icon>
        <Icon className="size-4">
          <circle cx="10" cy="10" r="10" fill="#44b83f" />
          <path d="M4 8h10M7 5l6 6" stroke="#17621a" strokeWidth="2" />
        </Icon>
        <Icon className="size-4">
          <path d="M3 11h4M11 11h4" stroke="#ddd" strokeWidth="2" />
        </Icon>
      </div>
    </div>
  );
}

function Watermark() {
  return (
    <div className="pointer-events-none absolute right-1.5 bottom-[5px] h-[60px] w-[205px] bg-white/30">
      <Icon className="absolute top-0 left-0 h-[60px] w-16" viewBox="0 0 64 60">
        <path d="M39 35C32 10 5-2 3 11c-1 9 6 20 17 27C10 32 5 20 9 12c6-8 22 3 30 23z" fill="#8a9eb4" />
        <path d="M22 36c-11 1-14 11-7 15-4-7 0-11 7-13z" fill="#8b98ad" />
        <path d="M40 25c14-5 20 2 16 11-5 13-19 24-31 19 11 1 23-8 27-19 3-8-2-12-12-11z" fill="#df6870" />
        <path d="M25 52c5 5 14 1 19-4-3 8-17 12-19 4z" fill="#a7454e" />
      </Icon>
      <p className="absolute top-0 left-[70px] font-['Noto_Serif_CJK_SC','Noto_Sans_CJK_SC',serif] text-[29px] leading-9 font-bold whitespace-nowrap text-[#83c9a0]/80">
        野火论坛
      </p>
      <p className="absolute top-[37px] left-[58px] font-['Liberation_Sans',sans-serif] text-base leading-5 text-[#808b91]/80">www.proewildfire.cn</p>
    </div>
  );
}

export default function App() {
  return (
    <div className="relative flex h-screen flex-col overflow-hidden bg-[#f9fafd] font-['Noto_Sans','Noto_Sans_CJK_SC',sans-serif]">
      <TitleBar />
      <MenuBar />
      <Ribbon />
      <div className="flex min-h-0 flex-1">
        <ModelTree />
        <main className="relative flex-1 overflow-hidden border-l border-[#123f86] bg-linear-to-b/srgb from-[#004eb4] to-black">
          <Scene />
          <ReferencePanel />
          <ViewToolbar />
        </main>
      </div>
      <StatusBar />
      <Taskbar />
      <Watermark />
      <div className="absolute top-0 right-[298px] h-[5px] w-[71px] overflow-hidden rounded-b bg-[#f3f5f5]">
        <span className="absolute -top-2 right-0 size-3 rounded-full bg-[#45c63d]" />
      </div>
    </div>
  );
}
